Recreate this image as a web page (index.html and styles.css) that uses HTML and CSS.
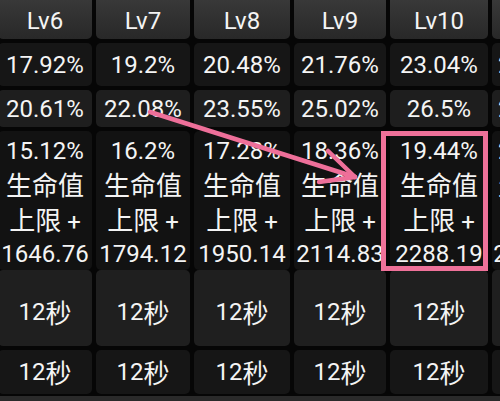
FILE: index.html
```html
<!DOCTYPE html>
<html>
<head>
    <title>技能等级表</title>
    <link rel="stylesheet" href="styles.css">
</head>
<body>
    <div id="levels">
        <div class="row head">
            <div class="cell">Lv6</div>
            <div class="cell">Lv7</div>
            <div class="cell">Lv8</div>
            <div class="cell">Lv9</div>
            <div class="cell">Lv10</div>
            <div class="cell">Lv11</div>
        </div>
        <div class="row dark">
            <div class="cell">17.92%</div>
            <div class="cell">19.2%</div>
            <div class="cell">20.48%</div>
            <div class="cell">21.76%</div>
            <div class="cell">23.04%</div>
            <div class="cell">24.32%</div>
        </div>
        <div class="row mid">
            <div class="cell">20.61%</div>
            <div class="cell">22.08%</div>
            <div class="cell">23.55%</div>
            <div class="cell">25.02%</div>
            <div class="cell">26.5%</div>
            <div class="cell">27.97%</div>
        </div>
        <div class="row heal">
            <div class="cell">15.12%<br><span class="zh">生命值</span><br><span class="zh">上限</span> +<br>1646.76</div>
            <div class="cell">16.2%<br><span class="zh">生命值</span><br><span class="zh">上限</span> +<br>1794.12</div>
            <div class="cell">17.28%<br><span class="zh">生命值</span><br><span class="zh">上限</span> +<br>1950.14</div>
            <div class="cell">18.36%<br><span class="zh">生命值</span><br><span class="zh">上限</span> +<br>2114.83</div>
            <div class="cell">19.44%<br><span class="zh">生命值</span><br><span class="zh">上限</span> +<br>2288.19</div>
            <div class="cell">20.52%<br><span class="zh">生命值</span><br><span class="zh">上限</span> +<br>2470.21</div>
        </div>
        <div class="row tall">
            <div class="cell">12<span class="zh">秒</span></div>
            <div class="cell">12<span class="zh">秒</span></div>
            <div class="cell">12<span class="zh">秒</span></div>
            <div class="cell">12<span class="zh">秒</span></div>
            <div class="cell">12<span class="zh">秒</span></div>
            <div class="cell">12<span class="zh">秒</span></div>
        </div>
        <div class="row dark last">
            <div class="cell">12<span class="zh">秒</span></div>
            <div class="cell">12<span class="zh">秒</span></div>
            <div class="cell">12<span class="zh">秒</span></div>
            <div class="cell">12<span class="zh">秒</span></div>
            <div class="cell">12<span class="zh">秒</span></div>
            <div class="cell">12<span class="zh">秒</span></div>
        </div>
        <div class="foot"></div>
    </div>

    <!-- annotation drawn over the table -->
    <div class="highlight"></div>
    <svg class="arrow" width="500" height="401" viewBox="0 0 500 401">
        <g stroke="#ee6f99" stroke-width="4.5" stroke-linecap="round" stroke-linejoin="round" fill="none">
            <line x1="150" y1="112" x2="355" y2="177"/>
            <line x1="355" y1="177" x2="328" y2="151"/>
            <line x1="355" y1="177" x2="319" y2="182"/>
        </g>
    </svg>
</body>
</html>
```

FILE: styles.css
```css
body {
    margin: 0;
    background-color: #060606;
    font-family: Roboto, "Noto Sans CJK SC", sans-serif;
    color: #f4f4f4;
    overflow: hidden;
    height: 401px;
    position: relative;
}
#levels {
    display: flex;
    flex-direction: column;
    gap: 4px;
    margin-top: -4px;
    margin-left: -2px;
}
.row {
    display: grid;
    grid-template-columns: 94px 94px 96px 92px 98px 90px;
    column-gap: 4px;
}
.cell {
    font-size: 24px;
    line-height: 30px;
    text-align: center;
    white-space: nowrap;
    border-radius: 5px;
    display: flex;
    align-items: center;
    justify-content: center;
}
.zh {
    font-family: "Noto Sans CJK SC", sans-serif;
    font-size: 26px;
    line-height: 30px;
}
.head {
    height: 43px;
}
.head .cell {
    padding-top: 6px;
    background: linear-gradient(#3a3a3a, #282828);
}
.dark {
    height: 43px;
}
.dark .cell {
    background-color: #161616;
}
.mid {
    height: 37px;
}
.mid .cell {
    background-color: #1e1e1e;
}
.heal {
    height: 135px;
}
.heal .cell {
    display: block;
    padding-top: 5px;
    line-height: 31.5px;
    background-color: #121212;
}
.heal .zh {
    line-height: 31.5px;
}
.tall {
    height: 76px;
}
.tall .cell {
    padding-top: 7px;
    background-color: #1f1f1f;
}
.last {
    height: 44px;
}
.foot {
    height: 20px;
    margin-top: -2px;
    background-color: #2a2a2a;
}
.highlight {
    position: absolute;
    left: 381px;
    top: 131px;
    width: 97px;
    height: 130px;
    border: 5px solid #ee7199;
}
.arrow {
    position: absolute;
    left: 0;
    top: 0;
    pointer-events: none;
}
```
